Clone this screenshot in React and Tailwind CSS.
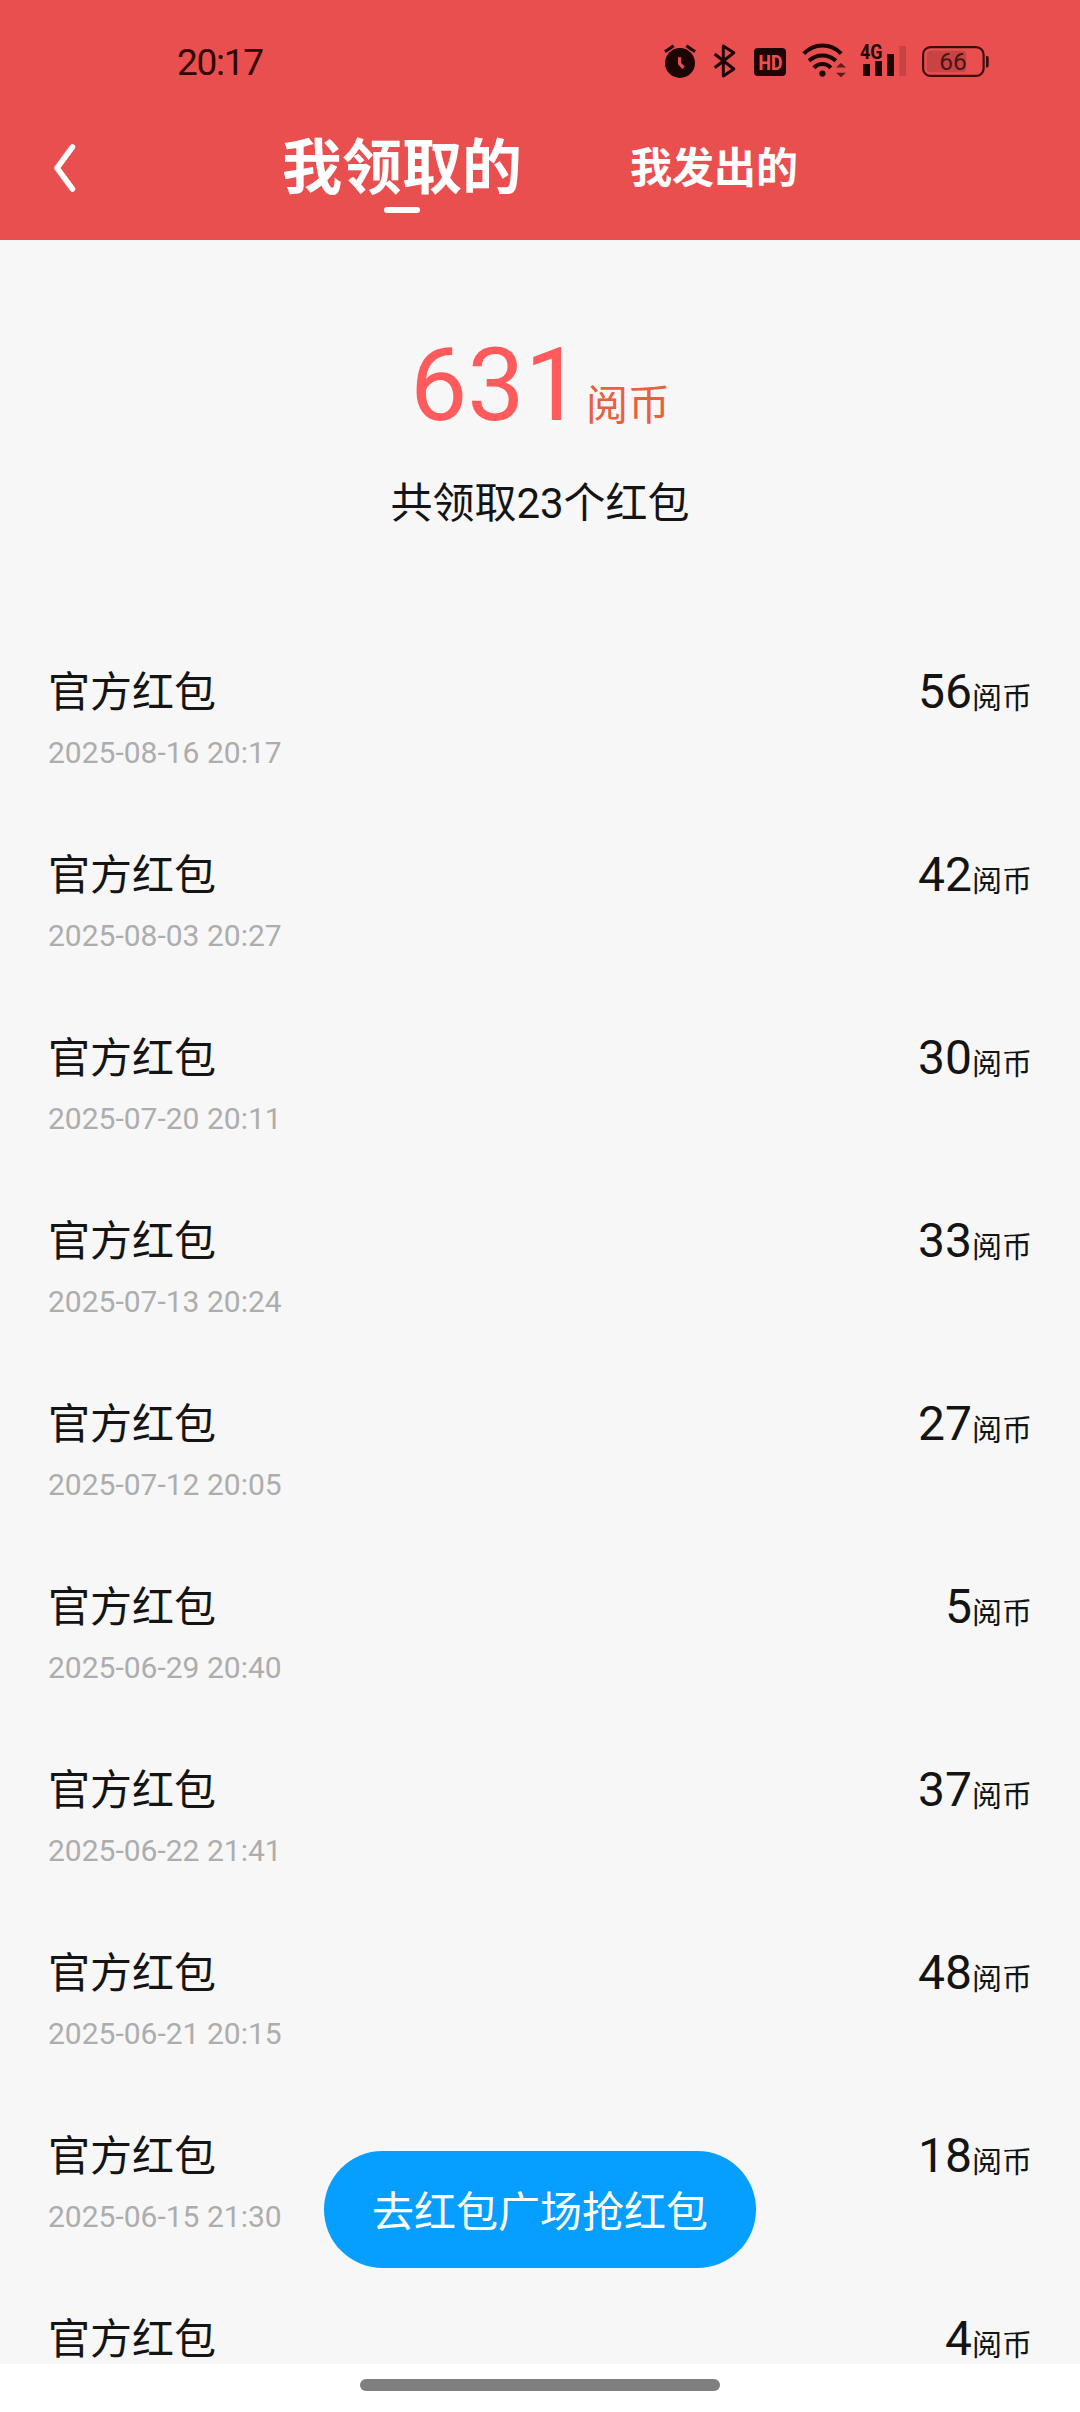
import { useState } from "react";

const records = [
  { id: 1, time: "2025-08-16 20:17", amount: 56 },
  { id: 2, time: "2025-08-03 20:27", amount: 42 },
  { id: 3, time: "2025-07-20 20:11", amount: 30 },
  { id: 4, time: "2025-07-13 20:24", amount: 33 },
  { id: 5, time: "2025-07-12 20:05", amount: 27 },
  { id: 6, time: "2025-06-29 20:40", amount: 5 },
  { id: 7, time: "2025-06-22 21:41", amount: 37 },
  { id: 8, time: "2025-06-21 20:15", amount: 48 },
  { id: 9, time: "2025-06-15 21:30", amount: 18 },
  { id: 10, time: "", amount: 4 },
];

const tabs = ["我领取的", "我发出的"];

function StatusIcons() {
  return (
    <div className="flex items-start text-[#1d0505]">
      {/* Alarm */}
      <svg width="32" height="36" viewBox="0 0 32 36" fill="none">
        <circle cx="16" cy="20" r="15" fill="currentColor" />
        <path d="M1 8.7 9.6 2.7M22.4 2.7 31 8.7" stroke="currentColor" strokeWidth="3.2" />
        <path d="M15.6 14.3V20.6L19.6 24.8" stroke="#e94f4f" strokeWidth="3.2" />
      </svg>
      {/* Bluetooth */}
      <svg className="ml-[17px]" width="24" height="36" viewBox="0 0 24 36" fill="none">
        <path
          d="M1.7 11 20.8 26 10.3 33V3L20.8 9.8 1.7 24.7"
          stroke="currentColor"
          strokeWidth="3"
          strokeLinejoin="round"
        />
      </svg>
      {/* HD */}
      <svg className="ml-[17px] overflow-visible" width="32" height="36" viewBox="0 0 32 36">
        <rect y="5" width="32" height="28" rx="4" fill="currentColor" />
        <text
          x="4.5"
          y="26.5"
          fill="#e94f4f"
          fontSize="21"
          fontWeight="800"
          textLength="24"
          lengthAdjust="spacingAndGlyphs"
        >
          HD
        </text>
      </svg>
      {/* Wifi */}
      <svg className="ml-4" width="44" height="36" viewBox="0 0 44 36" fill="none">
        <path
          d="M1.8 10.6A25.4 25.4 0 0 1 39.2 10.6M7 17.8A19.6 19.6 0 0 1 33.8 17.8M12 24.9A11 11 0 0 1 28.8 24.9"
          stroke="currentColor"
          strokeWidth="4"
        />
        <circle cx="20.4" cy="30.6" r="3.1" fill="currentColor" />
        <path d="M34 24.4 39 20 44 24.4ZM34 29.8H44L39 34.2Z" fill="#5e1d1d" />
      </svg>
      {/* Signal */}
      <svg className="ml-3.5 overflow-visible" width="46" height="36" viewBox="0 0 46 36">
        <path d="M3.3 21h6.7v12H3.3zM15.3 18H22v15h-6.7zM27.3 11H34v22h-6.7z" fill="currentColor" />
        <path d="M39.3 3H46v30h-6.7z" fill="#c84344" />
        <text
          x="0"
          y="16"
          fill="currentColor"
          fontSize="20"
          fontWeight="700"
          textLength="22.5"
          lengthAdjust="spacingAndGlyphs"
        >
          4G
        </text>
      </svg>
      {/* Battery */}
      <svg className="ml-4" width="67" height="36" viewBox="0 0 67 36">
        <rect x="4.7" y="7.7" width="39.5" height="21.6" rx="4" fill="#c84344" />
        <rect
          x="1.1"
          y="4.1"
          width="60.5"
          height="28.8"
          rx="7.5"
          fill="none"
          stroke="#3c0d0d"
          strokeWidth="2.2"
        />
        <path d="M64 13h1a1.7 1.7 0 0 1 1.7 1.7v8a1.7 1.7 0 0 1-1.7 1.7h-1z" fill="#3c0d0d" />
        <text x="17.3" y="27.3" fill="#4a1414" fontSize="24.5">
          66
        </text>
      </svg>
    </div>
  );
}

function RecordItem({ time, amount }) {
  return (
    <li className="flex h-[183px] shrink-0 items-start justify-between pt-[31px]">
      <div>
        <p className="text-[42px] leading-[64px]">官方红包</p>
        {time && <p className="mt-2 text-[30px] leading-10 text-[#adadad]">{time}</p>}
      </div>
      <p className="text-[48px] leading-[62px]">
        {amount}
        <span className="text-[30px]">阅币</span>
      </p>
    </li>
  );
}

export default function App() {
  const [active, setActive] = useState(0);

  return (
    <div className="relative flex h-[2412px] w-[1080px] flex-col overflow-hidden bg-[#f7f7f7] font-[Roboto,'Noto_Sans_CJK_SC',sans-serif] text-[#141414]">
      <header className="h-60 shrink-0 bg-[#e94f4f]">
        <div className="flex h-[94px] items-start justify-between pt-[43px] pr-[91px] pl-[177px]">
          <span className="text-[37px] leading-10 tracking-[-1.3px] text-[#330404]">20:17</span>
          <StatusIcons />
        </div>
        <div className="flex h-[146px] items-center text-white">
          <button className="mt-0.5 ml-[52px] w-[230px]" aria-label="返回">
            <svg width="26" height="52" viewBox="0 0 26 52" fill="none">
              <path
                d="M20.5 5 5 26 20.5 47"
                stroke="currentColor"
                strokeWidth="5.5"
                strokeLinecap="round"
                strokeLinejoin="round"
              />
            </svg>
          </button>
          <nav className="flex h-full items-center gap-[108px] pt-1">
            {tabs.map((tab, i) => (
              <button
                key={tab}
                onClick={() => setActive(i)}
                className={
                  i === active
                    ? "relative text-[60px] leading-[90px] font-bold"
                    : "relative text-[42px] leading-[60px] font-bold"
                }
              >
                {tab}
                {i === active && (
                  <span className="absolute bottom-px left-1/2 h-1.5 w-9 -translate-x-1/2 rounded-full bg-white" />
                )}
              </button>
            ))}
          </nav>
        </div>
      </header>

      <main className="flex min-h-0 flex-1 flex-col overflow-hidden">
        <section className="flex h-[390px] shrink-0 flex-col items-center pt-[85px]">
          <p className="flex h-[120px] items-baseline text-[102px] leading-[120px] text-[#ff5b5c]">
            631
            <span className="ml-1 text-[42px] text-[#e8603f]">阅币</span>
          </p>
          <p className="mt-[29px] text-[42px] leading-[60px]">共领取23个红包</p>
        </section>

        <ul className="flex flex-col px-12">
          {records.map((item) => (
            <RecordItem key={item.id} time={item.time} amount={item.amount} />
          ))}
        </ul>
      </main>

      <button className="absolute bottom-36 left-1/2 h-[117px] w-[432px] -translate-x-1/2 rounded-full bg-[#069fff] pt-[5px] text-[42px] text-white">
        去红包广场抢红包
      </button>

      <footer className="flex h-12 shrink-0 justify-center bg-white pt-[15px]">
        <div className="h-3 w-[360px] rounded-full bg-[#7f7f7f]" />
      </footer>
    </div>
  );
}
